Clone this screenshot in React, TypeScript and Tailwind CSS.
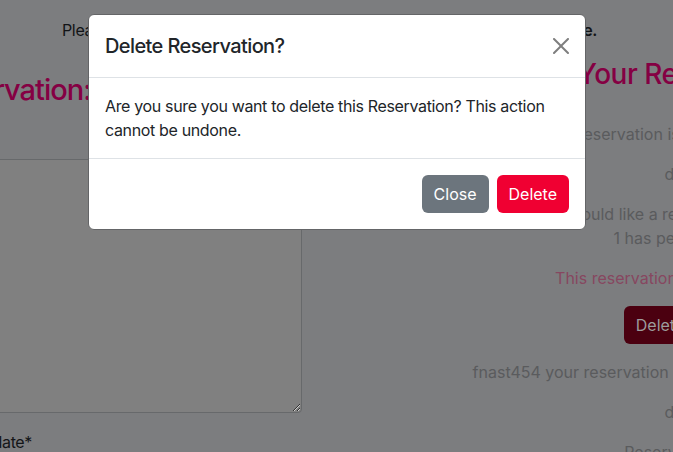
export default function App() {
  return (
    <div
      className="relative w-[673px] h-[452px] overflow-hidden bg-[#7c7d7f] text-[16px] leading-6 tracking-[-0.35px]"
      style={{ fontFamily: "Inter, 'Liberation Sans', sans-serif" }}
    >
      {/* Page intro line */}
      <div className="pt-[18px]">
        <p className="ml-[62px] w-[535px] flex justify-between whitespace-nowrap text-[#121416]">
          <span>Please fill in the form below to request</span>
          <span className="font-semibold">a time.</span>
        </p>
      </div>

      <div className="flex">
        {/* Left column: reservation form */}
        <div className="w-[301px] shrink-0">
          <div className="mt-[29px] flex justify-end w-[91px]">
            <h2 className="whitespace-nowrap text-[29px] leading-[38px] font-medium tracking-[-1px] text-[#850043]">
              Make a Reservation:
            </h2>
          </div>
          <textarea
            className="block mt-[50px] -ml-4 w-[318px] h-[254px] bg-[#808080] border border-[#67696b] rounded-[4px] outline-none"
            defaultValue=""
          />
          <div className="mt-[17px] flex justify-end w-[32px]">
            <label className="whitespace-nowrap text-[#141618]">End date*</label>
          </div>
        </div>

        {/* Right column: existing reservations */}
        <div className="w-[812px] shrink-0 text-center tracking-normal text-[#5a5b5d]">
          <h2 className="mt-[13px] mb-[29px] pr-[24px] text-[28px] leading-[38px] font-medium tracking-[-0.5px] text-[#850043]">
            Your Reservations
          </h2>
          <p className="mb-4">fnast454 your reservation is from 2023-04-12 until 2023-04-14</p>
          <p className="mb-4">description</p>
          <p className="mb-4">
            If you would like a reservation, please note: room
            <br />1 has pending approvals.
          </p>
          <p className="mb-4 text-[#874760]">This reservation is awaiting an approval.</p>
          <button className="mb-4 h-[38px] px-3 rounded-[6px] bg-[#4b0010] text-[#9c9c9c]">
            Delete Reservation
          </button>
          <p className="mb-4">fnast454 your reservation is from 2023-05-02 to 2023-05-03</p>
          <p className="mb-4">description</p>
          <p className="mb-4">Reservation approved</p>
        </div>
      </div>

      {/* Confirmation modal */}
      <div className="absolute left-[88px] top-[14px] w-[498px] bg-white rounded-[6px] border border-[#646567] text-[#212529]">
        <div className="flex items-center justify-between p-4 border-b border-[#dee2e6]">
          <h5 className="text-[20px] leading-[30px] font-medium tracking-[-0.6px]">Delete Reservation?</h5>
          <button className="w-4 h-4 opacity-50" aria-label="Close">
            <svg viewBox="0 0 16 16" className="w-4 h-4" fill="#000">
              <path d="M.293.293a1 1 0 0 1 1.414 0L8 6.586 14.293.293a1 1 0 1 1 1.414 1.414L9.414 8l6.293 6.293a1 1 0 0 1-1.414 1.414L8 9.414l-6.293 6.293a1 1 0 0 1-1.414-1.414L6.586 8 .293 1.707a1 1 0 0 1 0-1.414z" />
            </svg>
          </button>
        </div>
        <div className="p-4">
          Are you sure you want to delete this Reservation? This action cannot be undone.
        </div>
        <div className="flex justify-end p-3 border-t border-[#dee2e6] tracking-normal">
          <button className="m-1 h-[38px] px-3 rounded-[6px] bg-[#6c757d] text-white">Close</button>
          <button className="m-1 h-[38px] px-3 rounded-[6px] bg-[#f00032] text-white">Delete</button>
        </div>
      </div>
    </div>
  );
}
